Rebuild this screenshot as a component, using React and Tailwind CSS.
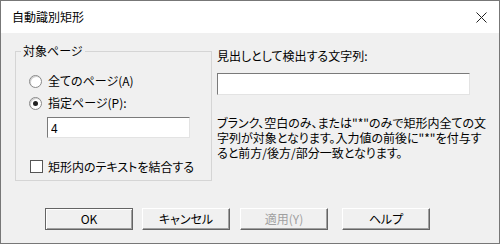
const font = { fontFamily: '"Noto Sans CJK JP", "Liberation Sans", sans-serif' };

const Radio = ({ checked, label, accel }) => (
    <label className="flex items-center h-[16px]">
        <span className="w-[13px] h-[13px] rounded-full border border-[#888] bg-white flex items-center justify-center shadow-[inset_1px_1px_0_#d0d0d0]">
            {checked && <span className="w-[5px] h-[5px] rounded-full bg-[#222]" />}
        </span>
        <span className="ml-[6px] text-[12px] leading-none">
            {label}({accel}){checked ? ":" : ""}
        </span>
    </label>
);

const Button = ({ children, primary, disabled, className }) => (
    <button
        type="button"
        className={
            "w-[88px] h-[22px] bg-[#f0f0f0] text-[12px] leading-none flex items-center justify-center " +
            (primary
                ? "border border-[#646464] shadow-[inset_1px_1px_0_#ffffff,inset_-1px_-1px_0_#a0a0a0] "
                : "border border-t-white border-l-white border-b-[#646464] border-r-[#646464] shadow-[inset_-1px_-1px_0_#a0a0a0] ") +
            (disabled ? "text-[#a0a0a0] " : "text-black ") +
            (className || "")
        }
    >
        {children}
    </button>
);

const App = () => {
    return (
        <div
            className="w-[500px] h-[244px] border border-[#777] bg-[#f0f0f0] flex flex-col text-black [font-feature-settings:'palt']"
            style={font}
        >
            <div className="h-[32px] bg-white flex items-center justify-between pl-[11px] pr-[11px] shrink-0">
                <span className="text-[12px] leading-none">自動識別矩形</span>
                <svg width="11" height="11" viewBox="0 0 11 11" className="mr-[1px]">
                    <path d="M0.5 0.5 L10.5 10.5 M10.5 0.5 L0.5 10.5" stroke="#222" strokeWidth="1" />
                </svg>
            </div>

            <div className="flex flex-row pl-[14px] pt-[10px]">
                <fieldset className="w-[197px] h-[138px] border border-[#d5d5d5] pl-[13px]">
                    <legend className="-ml-[8px] px-[2px] text-[12px] leading-[16px]">対象ページ</legend>
                    <div className="flex flex-col pt-[14px] gap-[6px]">
                        <Radio label="全てのページ" accel="A" />
                        <Radio checked label="指定ページ" accel="P" />
                    </div>
                    <input
                        type="text"
                        defaultValue="4"
                        className="ml-[18px] mt-[6px] w-[143px] h-[21px] bg-white border border-t-[#7a7a7a] border-l-[#7a7a7a] border-b-[#e3e3e3] border-r-[#e3e3e3] px-[3px] text-[12px] outline-none"
                    />
                    <label className="flex items-center mt-[22px] ml-[1px]">
                        <span className="w-[13px] h-[13px] border border-[#555] bg-white" />
                        <span className="ml-[5px] text-[12px] leading-none">矩形内のテキストを結合する</span>
                    </label>
                </fieldset>

                <div className="ml-[5px] flex flex-col">
                    <span className="text-[12px] leading-[16px] mt-[5px]">見出しとして検出する文字列:</span>
                    <input
                        type="text"
                        className="mt-[9px] w-[253px] h-[22px] bg-white border border-t-[#7a7a7a] border-l-[#7a7a7a] border-b-[#e3e3e3] border-r-[#e3e3e3] outline-none"
                    />
                    <div className="mt-[20px] flex flex-col text-[12px] leading-[15px] whitespace-nowrap">
                        <span className="h-[15px]">ブランク、空白のみ、または"*"のみで矩形内全ての文</span>
                        <span className="h-[15px]">字列が対象となります。入力値の前後に"*"を付与す</span>
                        <span className="h-[15px]">ると前方/後方/部分一致となります。</span>
                    </div>
                </div>
            </div>

            <div className="flex flex-row pl-[44px] mt-[27px]">
                <Button primary>OK</Button>
                <Button className="ml-[9px]">キャンセル</Button>
                <Button disabled className="ml-[10px]">適用(Y)</Button>
                <Button className="ml-[14px]">ヘルプ</Button>
            </div>
        </div>
    );
};

export default App;
